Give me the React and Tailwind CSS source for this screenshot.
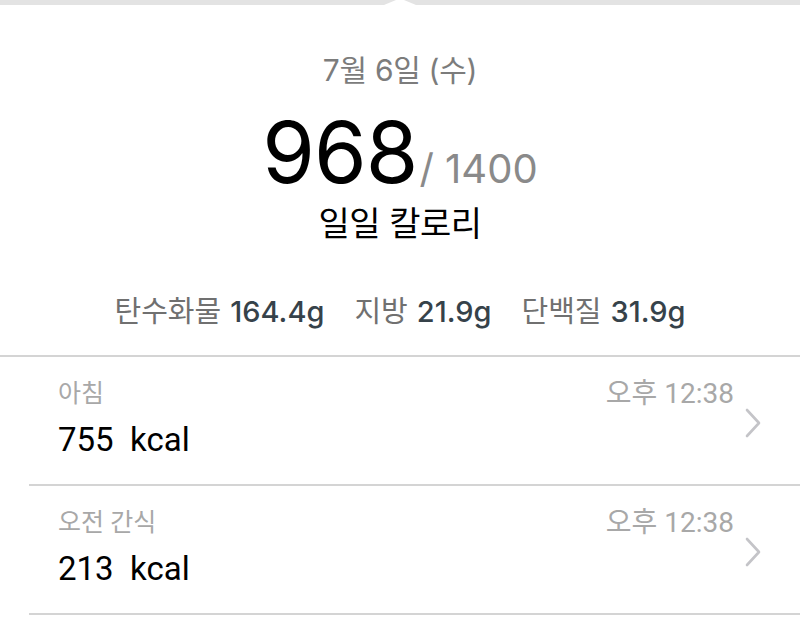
export default function App() {
  const macros = [
    { label: "탄수화물", value: "164.4g" },
    { label: "지방", value: "21.9g" },
    { label: "단백질", value: "31.9g" },
  ];
  const meals = [
    { name: "아침", kcal: "755", time: "오후 12:38" },
    { name: "오전 간식", kcal: "213", time: "오후 12:38" },
  ];
  const sans = "font-['Inter','Noto_Sans_CJK_KR',sans-serif]";
  const narrow = "font-['Liberation_Sans_Narrow','Roboto','Noto_Sans_CJK_KR',sans-serif]";

  return (
    <div className={`w-[800px] h-[620px] bg-white overflow-hidden ${sans}`}>
      {/* popover edge with its pointer notch */}
      <div className="relative h-[5px] bg-[#e3e3e3]">
        <svg className="absolute left-[384px] top-0" width="32" height="5" viewBox="0 0 32 5">
          <path d="M0 5 L12 0 L20 0 L32 5 Z" fill="#ffffff" />
        </svg>
      </div>

      <div className="flex flex-col items-center border-b-2 border-[#d4d4d4] pb-[26px]">
        <div className="mt-[49px] text-[30px] leading-[32px] text-[#7c7c7c] tracking-[-0.3px]">
          7월 6일 (수)
        </div>
        <div className="mt-[24px] flex items-baseline h-[85px]">
          <span className="text-[85px] leading-none text-black tracking-[-1px]">968</span>
          <span className="text-[40px] leading-none text-[#8a8a8a] ml-[2px]">/ 1400</span>
        </div>
        <div className="mt-[9px] text-[34px] leading-[40px] text-black tracking-[-0.5px]">
          일일 칼로리
        </div>
        <div className="mt-[51px] flex gap-[30px] text-[29px] leading-[34px]">
          {macros.map((m) => (
            <div key={m.label} className="flex gap-[9px]">
              <span className="text-[#707070]">{m.label}</span>
              <span className="font-medium text-[#36424a]">{m.value}</span>
            </div>
          ))}
        </div>
      </div>

      {meals.map((meal) => (
        <div key={meal.name} className="ml-[29px] border-b-2 border-[#d4d4d4] h-[129px] flex items-start pl-[29px] pr-[38px]">
          <div className="flex-1 pt-[22px]">
            <div className={`text-[25px] leading-[30px] text-[#a8a8a8] ${narrow}`}>{meal.name}</div>
            <div className={`mt-[13px] text-[33px] leading-[36px] text-black ${narrow}`}>
              {meal.kcal}&nbsp; kcal
            </div>
          </div>
          <div className="flex flex-col items-end pt-[22px]">
            <div className={`text-[28px] leading-[30px] text-[#a8a8a8] ${narrow}`}>{meal.time}</div>
          </div>
          <svg className="mt-[51px] ml-[10px]" width="18" height="30" viewBox="0 0 18 30">
            <path d="M3 2 L15 15 L3 28" fill="none" stroke="#c4c4c8" strokeWidth="2.6" strokeLinecap="round" strokeLinejoin="round" />
          </svg>
        </div>
      ))}
    </div>
  );
}
